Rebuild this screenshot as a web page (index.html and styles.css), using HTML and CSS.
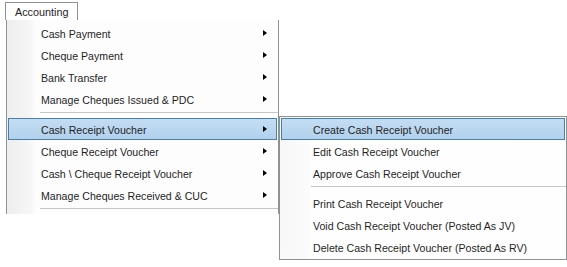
FILE: index.html
```html
<!DOCTYPE html>
<html lang="en">
  <head>
    <meta charset="UTF-8" />
    <meta name="viewport" content="width=device-width, initial-scale=1.0" />
    <title>Accounting Menu</title>
    <link rel="stylesheet" href="styles.css">
  </head>
  <body>
    <!-- top menu tab -->
    <div class="tabbar">
      <div class="tab">Accounting</div>
    </div>

    <div class="menus">
      <!-- main dropdown -->
      <ul class="menu main-menu">
        <li class="item">Cash Payment<span class="arrow"></span></li>
        <li class="item">Cheque Payment<span class="arrow"></span></li>
        <li class="item">Bank Transfer<span class="arrow"></span></li>
        <li class="item">Manage Cheques Issued &amp; PDC<span class="arrow"></span></li>
        <li class="sep"></li>
        <li class="item active">Cash Receipt Voucher<span class="arrow"></span></li>
        <li class="item">Cheque Receipt Voucher<span class="arrow"></span></li>
        <li class="item">Cash \ Cheque Receipt Voucher<span class="arrow"></span></li>
        <li class="item">Manage Cheques Received &amp; CUC<span class="arrow"></span></li>
        <li class="sep"></li>
      </ul>

      <!-- sub menu -->
      <ul class="menu sub-menu">
        <li class="item active">Create Cash Receipt Voucher</li>
        <li class="item">Edit Cash Receipt Voucher</li>
        <li class="item">Approve Cash Receipt Voucher</li>
        <li class="sep"></li>
        <li class="item">Print Cash Receipt Voucher</li>
        <li class="item">Void Cash Receipt Voucher (Posted As JV)</li>
        <li class="item">Delete Cash Receipt Voucher (Posted As RV)</li>
      </ul>
    </div>
  </body>
</html>
```

FILE: styles.css
```css
/* page */
body {
  margin: 0;
  padding: 2px 0 0 5px;
  background: #fff;
  font-family: "Liberation Sans", Arial, sans-serif;
  font-size: 10.6px;
  color: #1e1e1e;
}

/* tab */
.tabbar {
  display: flex;
}

.tab {
  width: 62px;
  height: 17px;
  padding-left: 9px;
  line-height: 18px;
  border: 1px solid #8e9196;
  border-bottom: none;
  background: #fff;
  font-size: 10.8px;
}

/* menus */
.menus {
  display: flex;
  align-items: flex-start;
}

.menu {
  list-style: none;
  margin: 0;
  padding: 0;
}

.main-menu {
  width: 271px;
  margin-left: 1px;
  padding: 2px 0 0;
  border-left: 1px solid #8e9196;
  border-right: 1px solid #8e9196;
  background: linear-gradient(to right, #eeeeee 0, #f6f6f6 24px, #fdfdfd 29px, #fdfdfd 100%);
}

.sub-menu {
  width: 286px;
  margin-top: 96px;
  padding: 1px 0;
  border: 1px solid #8e9196;
  background: linear-gradient(to right, #f8f8f8 0, #fbfbfb 28px, #fefefe 32px, #fefefe 100%);
}

.item {
  position: relative;
  height: 22px;
  line-height: 22px;
  padding-left: 32px;
  border: 1px solid transparent;
  margin: 0 1px;
  box-sizing: border-box;
}

.sub-menu .item {
  padding-left: 31px;
}

.item.active {
  border-color: #4a7fa8;
  background: linear-gradient(to bottom, #c4ddf3, #b2d1ee);
}

.arrow {
  position: absolute;
  right: 9px;
  top: 7px;
  width: 0;
  height: 0;
  border-top: 3.5px solid transparent;
  border-bottom: 3.5px solid transparent;
  border-left: 4px solid #000;
}

/* separators */
.sep {
  height: 6px;
  margin-left: 33px;
}

.sep::after {
  content: "";
  display: block;
  margin-top: 2px;
  height: 1px;
  background: #c6c6c6;
  border-bottom: 1px solid #fff;
}

.sub-menu .sep {
  margin-left: 31px;
}
```
